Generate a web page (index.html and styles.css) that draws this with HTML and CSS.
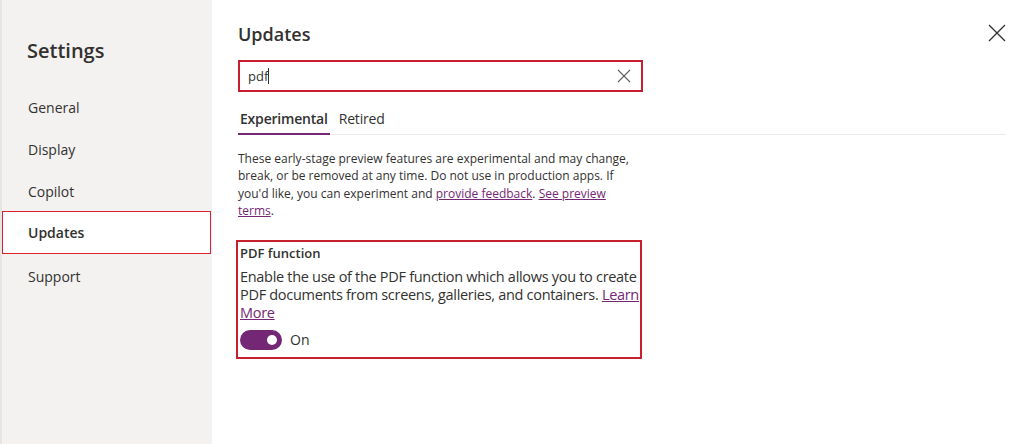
FILE: index.html
```html
<!DOCTYPE html>
<html lang="en">
<head>
<meta charset="utf-8">
<title>Settings - Updates</title>
<link rel="stylesheet" href="styles.css">
</head>
<body>
<div class="app">
  <nav class="sidebar">
    <h1 class="sidebar-title">Settings</h1>
    <ul class="nav">
      <li class="nav-item">General</li>
      <li class="nav-item">Display</li>
      <li class="nav-item">Copilot</li>
      <li class="nav-item active">Updates</li>
      <li class="nav-item">Support</li>
    </ul>
  </nav>
  <main class="content">
    <div class="header">
      <h2 class="page-title">Updates</h2>
      <button class="close" aria-label="Close">
        <svg width="18" height="18" viewBox="0 0 18 18"><path d="M1 1L17 17M17 1L1 17" stroke="#323130" stroke-width="1.3" fill="none"/></svg>
      </button>
    </div>
    <div class="search">
      <span class="search-text">pdf<span class="caret"></span></span>
      <svg class="clear" width="14" height="14" viewBox="0 0 14 14"><path d="M1 1L13 13M13 1L1 13" stroke="#605e5c" stroke-width="1.1" fill="none"/></svg>
    </div>
    <div class="tabs">
      <span class="tab selected">Experimental</span>
      <span class="tab">Retired</span>
    </div>
    <p class="intro">These early-stage preview features are experimental and may change, break, or be removed at any time. Do not use in production apps. If you'd like, you can experiment and <a href="#">provide feedback</a>. <a href="#">See preview terms</a>.</p>
    <section class="feature">
      <h3 class="feature-title">PDF function</h3>
      <p class="feature-desc">Enable the use of the PDF function which allows you to create PDF documents from screens, galleries, and containers. <a href="#">Learn More</a></p>
      <div class="toggle-row">
        <span class="toggle"><span class="knob"></span></span>
        <span class="toggle-label">On</span>
      </div>
    </section>
  </main>
</div>
</body>
</html>
```
FILE: styles.css
```css
* { box-sizing: border-box; }
html, body { margin: 0; padding: 0; }
body {
  font-family: "Open Sans", "Noto Sans", sans-serif;
  color: #323130;
  background: #ffffff;
  width: 1024px;
  height: 444px;
  overflow: hidden;
}
.app {
  display: flex;
  height: 444px;
}
.sidebar {
  width: 212px;
  flex: none;
  background: #f3f2f1;
  border-left: 2px solid #e6e5e3;
  padding-top: 38px;
}
.sidebar-title {
  margin: 0 0 21px 25px;
  font-size: 20px;
  font-weight: 600;
  line-height: 26px;
  color: #323130;
}
.nav {
  list-style: none;
  margin: 0;
  padding: 0;
}
.nav-item {
  height: 42px;
  line-height: 43px;
  padding-left: 25px;
  font-size: 14px;
  color: #323130;
  border: 1px solid transparent;
}
.nav-item.active {
  background: #ffffff;
  font-weight: 600;
  border: 1.5px solid #d9222e;
  margin-right: 1px;
  height: 43px;
  line-height: 42px;
}
.content {
  flex: 1;
  padding: 20px 18px 0 26px;
  position: relative;
}
.header {
  display: flex;
  justify-content: space-between;
  align-items: flex-start;
}
.page-title {
  margin: 0;
  font-size: 18px;
  font-weight: 600;
  line-height: 28px;
}
.close {
  background: none;
  border: 0;
  padding: 0;
  margin-top: 4px;
  width: 18px;
  height: 18px;
}
.search {
  margin-top: 12px;
  width: 405px;
  height: 32px;
  border: 2px solid #c8202f;
  display: flex;
  align-items: center;
  justify-content: space-between;
  padding: 0 10px 0 8px;
}
.search-text {
  font-size: 13px;
  color: #323130;
  display: inline-flex;
  align-items: center;
}
.caret {
  display: inline-block;
  width: 1px;
  height: 16px;
  background: #323130;
}
.tabs {
  margin-top: 15px;
  display: flex;
  gap: 7px;
  border-bottom: 1px solid #edebe9;
}
.tab {
  font-size: 14px;
  line-height: 24px;
  padding: 0 2px 1px 2px;
  color: #323130;
  border-bottom: 2px solid transparent;
  letter-spacing: -0.2px;
}
.tab.selected {
  font-weight: 600;
  border-bottom-color: #742774;
  margin-bottom: -1px;
}
.intro {
  margin: 15px 0 0 0;
  width: 400px;
  font-size: 12px;
  line-height: 17.4px;
  color: #323130;
}
a {
  color: #742774;
  text-decoration: underline;
}
.feature {
  margin-top: 20px;
  margin-left: -2px;
  width: 406px;
  border: 2px solid #c8202f;
  padding: 1px 1px 7px 2px;
}
.feature-title {
  margin: 0;
  font-size: 13px;
  font-weight: 600;
  line-height: 20px;
}
.feature-desc {
  margin: 5px 0 0 0;
  font-size: 14.5px;
  line-height: 18px;
  letter-spacing: -0.3px;
}
.toggle-row {
  display: flex;
  align-items: center;
  gap: 8px;
  margin-top: 8px;
}
.toggle {
  width: 42px;
  height: 20px;
  border-radius: 10px;
  background: #742774;
  position: relative;
  display: inline-block;
}
.knob {
  position: absolute;
  right: 5px;
  top: 5px;
  width: 10px;
  height: 10px;
  border-radius: 50%;
  background: #ffffff;
}
.toggle-label {
  font-size: 14px;
}
```
